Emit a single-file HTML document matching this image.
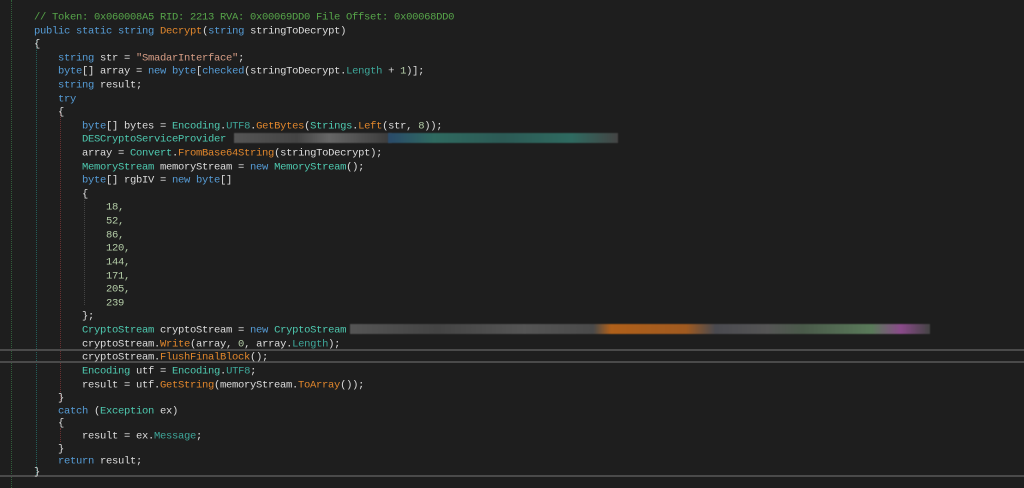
<!DOCTYPE html>
<html><head><style>
body{margin:0;background:#1e1e1e;width:1024px;height:488px;overflow:hidden;position:relative;font-family:"Liberation Mono",monospace;font-size:10.5px;letter-spacing:-0.3px;color:#dcdcdc}
.l{position:absolute;height:14px;line-height:14px;white-space:pre;transform:translateY(1.5px)}
.c{color:#57a64a}.k{color:#569cd6}.t{color:#4ec9b0}.m{color:#e0862c}.p{color:#3ea79a}.n{color:#b5cea8}.s{color:#d69d85}
.g{position:absolute;width:0;border-left:1px dotted}
.h{position:absolute;left:0;width:1024px;height:0;border-top:2px solid #4a4a4a}
.b{position:absolute;height:10px;filter:blur(0.6px)}
</style></head><body>
<div class="g" style="left:11px;top:0;height:488px;border-color:#2f5f3a"></div>
<div class="g" style="left:36px;top:40px;height:435px;border-color:#235f5a"></div>
<div class="g" style="left:60px;top:112px;height:290px;border-color:#6a3030"></div>
<div class="g" style="left:60px;top:428px;height:14px;border-color:#6a3030"></div>
<div class="g" style="left:84px;top:195px;height:110px;border-color:#444"></div>
<div class="h" style="top:349px"></div>
<div class="h" style="top:361px"></div>
<div class="h" style="top:475px"></div>

<div class="l c" style="left:34px;top:9px">// Token: 0x060008A5 RID: 2213 RVA: 0x00069DD0 File Offset: 0x00068DD0</div>
<div class="l" style="left:34px;top:23px"><span class="k">public static string</span> <span class="m">Decrypt</span>(<span class="k">string</span> stringToDecrypt)</div>
<div class="l" style="left:34px;top:36px">{</div>
<div class="l" style="left:58px;top:50px"><span class="k">string</span> str = <span class="s">"SmadarInterface"</span>;</div>
<div class="l" style="left:58px;top:63px"><span class="k">byte</span>[] array = <span class="k">new byte</span>[<span class="k">checked</span>(stringToDecrypt.<span class="p">Length</span> + <span class="n">1</span>)];</div>
<div class="l" style="left:58px;top:77px"><span class="k">string</span> result;</div>
<div class="l k" style="left:58px;top:91px">try</div>
<div class="l" style="left:58px;top:104px">{</div>
<div class="l" style="left:82px;top:118px"><span class="k">byte</span>[] bytes = <span class="t">Encoding</span>.<span class="p">UTF8</span>.<span class="m">GetBytes</span>(<span class="t">Strings</span>.<span class="m">Left</span>(str, <span class="n">8</span>));</div>
<div class="l t" style="left:82px;top:131px">DESCryptoServiceProvider</div>
<div class="b" style="left:234px;top:133px;width:158px;background:linear-gradient(90deg,#555,#444 40%,#666 60%,#3a3a3a)"></div>
<div class="b" style="left:388px;top:133px;width:230px;background:linear-gradient(90deg,#2a4a6a,#2f6a60 20%,#2c5a55 50%,#2f6a60 80%,#444)"></div>
<div class="l" style="left:82px;top:145px">array = <span class="t">Convert</span>.<span class="m">FromBase64String</span>(stringToDecrypt);</div>
<div class="l" style="left:82px;top:159px"><span class="t">MemoryStream</span> memoryStream = <span class="k">new</span> <span class="t">MemoryStream</span>();</div>
<div class="l" style="left:82px;top:172px"><span class="k">byte</span>[] rgbIV = <span class="k">new byte</span>[]</div>
<div class="l" style="left:82px;top:186px">{</div>
<div class="l n" style="left:106px;top:199px">18,</div>
<div class="l n" style="left:106px;top:213px">52,</div>
<div class="l n" style="left:106px;top:227px">86,</div>
<div class="l n" style="left:106px;top:240px">120,</div>
<div class="l n" style="left:106px;top:254px">144,</div>
<div class="l n" style="left:106px;top:268px">171,</div>
<div class="l n" style="left:106px;top:281px">205,</div>
<div class="l n" style="left:106px;top:295px">239</div>
<div class="l" style="left:82px;top:308px">};</div>
<div class="l" style="left:82px;top:322px"><span class="t">CryptoStream</span> cryptoStream = <span class="k">new</span> <span class="t">CryptoStream</span></div>
<div class="b" style="left:350px;top:324px;width:580px;background:linear-gradient(90deg,#555,#444 15%,#555 30%,#4a4a4a 42%,#b0601a 45%,#a05a20 58%,#4a4a50 63%,#555 72%,#4a5a4a 78%,#5a7a5a 90%,#8a4a8a 95%,#444)"></div>
<div class="l" style="left:82px;top:336px">cryptoStream.<span class="m">Write</span>(array, <span class="n">0</span>, array.<span class="p">Length</span>);</div>
<div class="l" style="left:82px;top:349px">cryptoStream.<span class="m">FlushFinalBlock</span>();</div>
<div class="l" style="left:82px;top:363px"><span class="t">Encoding</span> utf = <span class="t">Encoding</span>.<span class="p">UTF8</span>;</div>
<div class="l" style="left:82px;top:377px">result = utf.<span class="m">GetString</span>(memoryStream.<span class="m">ToArray</span>());</div>
<div class="l" style="left:58px;top:390px">}</div>
<div class="l" style="left:58px;top:403px"><span class="k">catch</span> (<span class="t">Exception</span> ex)</div>
<div class="l" style="left:58px;top:415px">{</div>
<div class="l" style="left:82px;top:428px">result = ex.<span class="p">Message</span>;</div>
<div class="l" style="left:58px;top:441px">}</div>
<div class="l" style="left:58px;top:453px"><span class="k">return</span> result;</div>
<div class="l" style="left:34px;top:464px">}</div>
</body></html>
